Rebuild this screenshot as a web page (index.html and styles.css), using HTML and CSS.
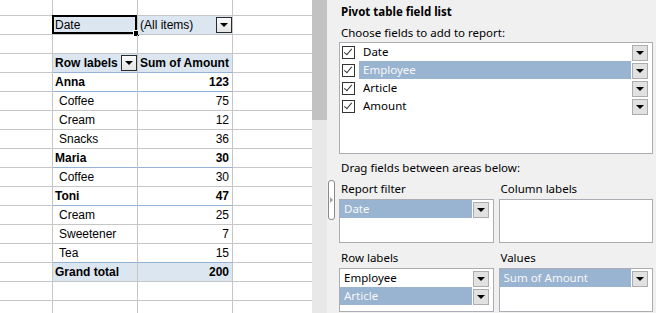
FILE: index.html
```html
<!DOCTYPE html>
<html lang="en">
  <head>
    <meta charset="UTF-8" />
    <title>Pivot table</title>
    <link rel="stylesheet" href="styles.css">
  </head>
  <body>
    <div class="screen">
      <div class="sheet">
        <!-- partial first row -->
        <div class="c"></div><div class="c"></div><div class="c"></div><div class="c last"></div>

        <div class="c"></div>
        <div class="c hdr sel">Date</div>
        <div class="c hdr drop-cell">(All items)<span class="xl-btn"></span></div>
        <div class="c last"></div>

        <div class="c"></div><div class="c"></div><div class="c"></div><div class="c last"></div>

        <div class="c"></div>
        <div class="c hdr bold line drop-cell">Row labels<span class="xl-btn"></span></div>
        <div class="c hdr bold line">Sum of Amount</div>
        <div class="c last"></div>

        <div class="c"></div>
        <div class="c bold line">Anna</div>
        <div class="c bold num line">123</div>
        <div class="c last"></div>

        <div class="c"></div><div class="c sub">Coffee</div><div class="c num">75</div><div class="c last"></div>
        <div class="c"></div><div class="c sub">Cream</div><div class="c num">12</div><div class="c last"></div>
        <div class="c"></div><div class="c sub">Snacks</div><div class="c num">36</div><div class="c last"></div>

        <div class="c"></div>
        <div class="c bold line">Maria</div>
        <div class="c bold num line">30</div>
        <div class="c last"></div>

        <div class="c"></div><div class="c sub">Coffee</div><div class="c num">30</div><div class="c last"></div>

        <div class="c"></div>
        <div class="c bold line">Toni</div>
        <div class="c bold num line">47</div>
        <div class="c last"></div>

        <div class="c"></div><div class="c sub">Cream</div><div class="c num">25</div><div class="c last"></div>
        <div class="c"></div><div class="c sub">Sweetener</div><div class="c num">7</div><div class="c last"></div>
        <div class="c"></div><div class="c sub line">Tea</div><div class="c num line">15</div><div class="c last"></div>

        <div class="c"></div>
        <div class="c hdr bold">Grand total</div>
        <div class="c hdr bold num">200</div>
        <div class="c last"></div>

        <div class="c"></div><div class="c"></div><div class="c"></div><div class="c last"></div>
        <div class="c"></div><div class="c"></div><div class="c"></div><div class="c last"></div>
      </div>

      <div class="scrollbar"><div class="thumb"></div></div>

      <div class="panel">
        <div class="splitter"><span></span></div>
        <div class="title">Pivot table field list</div>
        <div class="label">Choose fields to add to report:</div>
        <div class="fields">
          <div class="item"><span class="check"></span><span class="name">Date</span><span class="btn"></span></div>
          <div class="item"><span class="check"></span><span class="name selected">Employee</span><span class="btn"></span></div>
          <div class="item"><span class="check"></span><span class="name">Article</span><span class="btn"></span></div>
          <div class="item"><span class="check"></span><span class="name">Amount</span><span class="btn"></span></div>
        </div>
        <div class="label drag">Drag fields between areas below:</div>
        <div class="areas">
          <div class="area">
            <div class="label">Report filter</div>
            <div class="area-box">
              <div class="item"><span class="name selected">Date</span><span class="btn"></span></div>
            </div>
          </div>
          <div class="area">
            <div class="label">Column labels</div>
            <div class="area-box"></div>
          </div>
          <div class="area">
            <div class="label">Row labels</div>
            <div class="area-box">
              <div class="item"><span class="name">Employee</span><span class="btn"></span></div>
              <div class="item"><span class="name selected">Article</span><span class="btn"></span></div>
            </div>
          </div>
          <div class="area">
            <div class="label">Values</div>
            <div class="area-box">
              <div class="item"><span class="name selected">Sum of Amount</span><span class="btn"></span></div>
            </div>
          </div>
        </div>
      </div>
    </div>
  </body>
</html>
```

FILE: styles.css
```css
body {
  margin: 0;
  overflow: hidden;
  background-color: #fff;
}
.screen {
  display: flex;
  width: 656px;
  height: 313px;
  overflow: hidden;
}

/* spreadsheet */
.sheet {
  display: grid;
  grid-template-columns: 53px 85px 95px 79px;
  grid-template-rows: 16px;
  grid-auto-rows: 19px;
  font-family: "Liberation Sans", Arial, sans-serif;
  font-size: 12px;
  color: #000;
  flex-shrink: 0;
}
.c {
  box-sizing: border-box;
  border-right: 1px solid #c6c6c6;
  border-bottom: 1px solid #c6c6c6;
  padding: 0 2px;
  line-height: 19px;
  white-space: nowrap;
  position: relative;
}
.c.last {
  border-right: none;
}
.c.hdr {
  background-color: #dce6f1;
}
.c.bold {
  font-weight: bold;
}
.c.num {
  text-align: right;
  padding-right: 3px;
}
.c.sub {
  padding-left: 6px;
}
.c.line {
  border-bottom-color: #95b3d7;
}
.c.sel::before {
  content: '';
  position: absolute;
  top: -1px;
  left: -1px;
  right: 0;
  bottom: 0;
  border: 2px solid #000;
}
.c.sel::after {
  content: '';
  position: absolute;
  right: -2px;
  bottom: -2px;
  width: 5px;
  height: 5px;
  background-color: #000;
  border: 1px solid #fff;
  border-width: 1px 0 0 1px;
}
.drop-cell {
  display: flex;
  justify-content: space-between;
  align-items: center;
  padding-right: 0;
}
.xl-btn {
  box-sizing: border-box;
  width: 16px;
  height: 16px;
  border: 1px solid #2a2a2a;
  background: linear-gradient(#fafafa, #e4e4e4);
  display: flex;
  align-items: center;
  justify-content: center;
}
.xl-btn::after,
.btn::after {
  content: '';
  border-left: 4px solid transparent;
  border-right: 4px solid transparent;
  border-top: 4px solid #000;
}

/* scrollbar */
.scrollbar {
  width: 15px;
  flex-shrink: 0;
  background-color: #e8e8e8;
}
.thumb {
  height: 120px;
  background-color: #c2c2c2;
}

/* field list panel */
.panel {
  flex: 1;
  position: relative;
  background-color: #f0f0f0;
  padding: 3px 3px 0 12px;
  font-family: "Noto Sans", "Open Sans", sans-serif;
  font-size: 11.5px;
  color: #000;
}
.title {
  font-weight: bold;
  line-height: 18px;
  padding-left: 2px;
}
.label {
  line-height: 18px;
  padding-left: 2px;
}
.panel > .label {
  margin-top: 3px;
}
.panel > .label.drag {
  margin-top: 5px;
}
.fields {
  box-sizing: border-box;
  height: 112px;
  background-color: #fff;
  border: 1px solid #abadb3;
}
.item {
  display: flex;
  height: 18px;
  padding-right: 4px;
}
.fields .item {
  padding-left: 2px;
}
.check {
  box-sizing: border-box;
  width: 13px;
  height: 13px;
  margin: 3px 4px 0 0;
  border: 1px solid #333;
  background-color: #fff;
  position: relative;
}
.check::after {
  content: '';
  position: absolute;
  left: 3px;
  top: 0px;
  width: 3px;
  height: 7px;
  border-right: 1px solid #333;
  border-bottom: 1px solid #333;
  transform: rotate(40deg);
}
.name {
  flex: 1;
  line-height: 18px;
  padding-left: 4px;
  white-space: nowrap;
}
.name.selected {
  background-color: #99b4d1;
  color: #f7f7f7;
}
.btn {
  box-sizing: border-box;
  width: 16px;
  height: 16px;
  margin: 2px 0 0 1px;
  background-color: #e1e1e1;
  border: 1px solid #adadad;
  display: flex;
  align-items: center;
  justify-content: center;
}
.areas {
  display: grid;
  grid-template-columns: 1fr 1fr;
  column-gap: 5px;
  row-gap: 6px;
  margin-top: 3px;
}
.area-box {
  box-sizing: border-box;
  height: 44px;
  background-color: #fff;
  border: 1px solid #abadb3;
}
.area .label {
  line-height: 18px;
  margin-bottom: 1px;
}
.splitter {
  position: absolute;
  left: 1px;
  top: 180px;
  box-sizing: border-box;
  width: 7px;
  height: 40px;
  border: 1px solid #8a8a8a;
  border-radius: 3px;
  background-color: #fff;
  display: flex;
  align-items: center;
  justify-content: center;
}
.splitter span {
  border-top: 3px solid transparent;
  border-bottom: 3px solid transparent;
  border-left: 3px solid #a0a0a0;
}
```
